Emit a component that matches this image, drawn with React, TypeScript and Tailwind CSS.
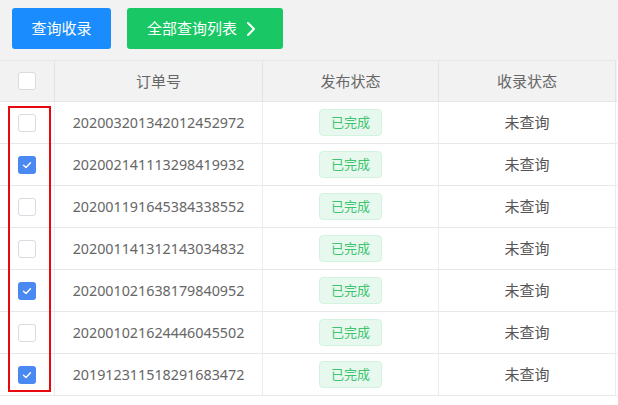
import React from "react";

const rows = [
  { id: "20200320134201245" + "2972", checked: false },
  { id: "20200214111329841" + "9932", checked: true },
  { id: "20200119164538433" + "8552", checked: false },
  { id: "20200114131214303" + "4832", checked: false },
  { id: "20200102163817984" + "0952", checked: true },
  { id: "20200102162444604" + "5502", checked: false },
  { id: "20191231151829168" + "3472", checked: true },
];

function Checkbox({ checked }: { checked: boolean }) {
  if (checked) {
    return (
      <div className="w-[18px] h-[18px] rounded-[3px] bg-[#4a88f2] flex items-center justify-center">
        <svg width="12" height="12" viewBox="0 0 12 12">
          <polyline points="2.5,6.2 5,8.5 9.5,3.8" fill="none" stroke="#ffffff" strokeWidth="1.4" strokeLinecap="round" strokeLinejoin="round" />
        </svg>
      </div>
    );
  }
  return <div className="w-[18px] h-[18px] rounded-[3px] bg-white border border-[#d9dbe0]" />;
}

export default function App() {
  const font = { fontFamily: '"Noto Sans", "Noto Sans CJK SC", sans-serif' };
  return (
    <div className="w-[618px] h-[405px] bg-white relative overflow-hidden" style={font}>
      <div className="h-[60px] bg-[#f2f2f2] flex items-start pt-[8px] pl-[12px] gap-[16px]">
        <div className="w-[99px] h-[41px] rounded-[3px] bg-[#1a8cfe] text-white text-[15px] flex items-center justify-center">
          查询收录
        </div>
        <div className="w-[156px] h-[41px] rounded-[3px] bg-[#19c865] text-white text-[15px] flex items-center pl-[20px] gap-[9px]">
          <span>全部查询列表</span>
          <svg width="10" height="16" viewBox="0 0 10 16">
            <polyline points="2,2 8,8 2,14" fill="none" stroke="#ffffff" strokeWidth="2" strokeLinecap="round" strokeLinejoin="round" />
          </svg>
        </div>
      </div>
      <div className="w-[617px]">
        <div className="grid grid-cols-[55px_208px_176px_177px] h-[42px] bg-[#f2f2f2] border-t border-[#e6e6e6] border-b border-b-[#e6e6e6] text-[15px] text-[#666]">
          <div className="flex items-center justify-center border-r border-[#e3e3e3]">
            <div className="w-[18px] h-[18px] rounded-[3px] bg-white border border-[#d9dbe0]" />
          </div>
          <div className="flex items-center justify-center border-r border-[#e3e3e3]">订单号</div>
          <div className="flex items-center justify-center border-r border-[#e3e3e3]">发布状态</div>
          <div className="flex items-center justify-center border-r border-[#e3e3e3]">收录状态</div>
        </div>
        {rows.map((r) => (
          <div key={r.id} className="grid grid-cols-[55px_208px_176px_177px] h-[42px] border-b border-[#e8e8e8] text-[15px] text-[#666]">
            <div className="flex items-center justify-center border-r border-[#ececec]">
              <Checkbox checked={r.checked} />
            </div>
            <div className="flex items-center justify-center border-r border-[#ececec] text-[14.3px]">{r.id}</div>
            <div className="flex items-center justify-center border-r border-[#ececec]">
              <div className="w-[63px] h-[27px] rounded-[4px] bg-[#e7f9ee] border border-[#d3f3e0] text-[#3ec46f] text-[13px] flex items-center justify-center">
                已完成
              </div>
            </div>
            <div className="flex items-center justify-center border-r border-[#ececec] text-[#555]">未查询</div>
          </div>
        ))}
      </div>
      <div className="absolute left-[8px] top-[106px] w-[43px] h-[286px] border-2 border-[#e8080d]" />
    </div>
  );
}
